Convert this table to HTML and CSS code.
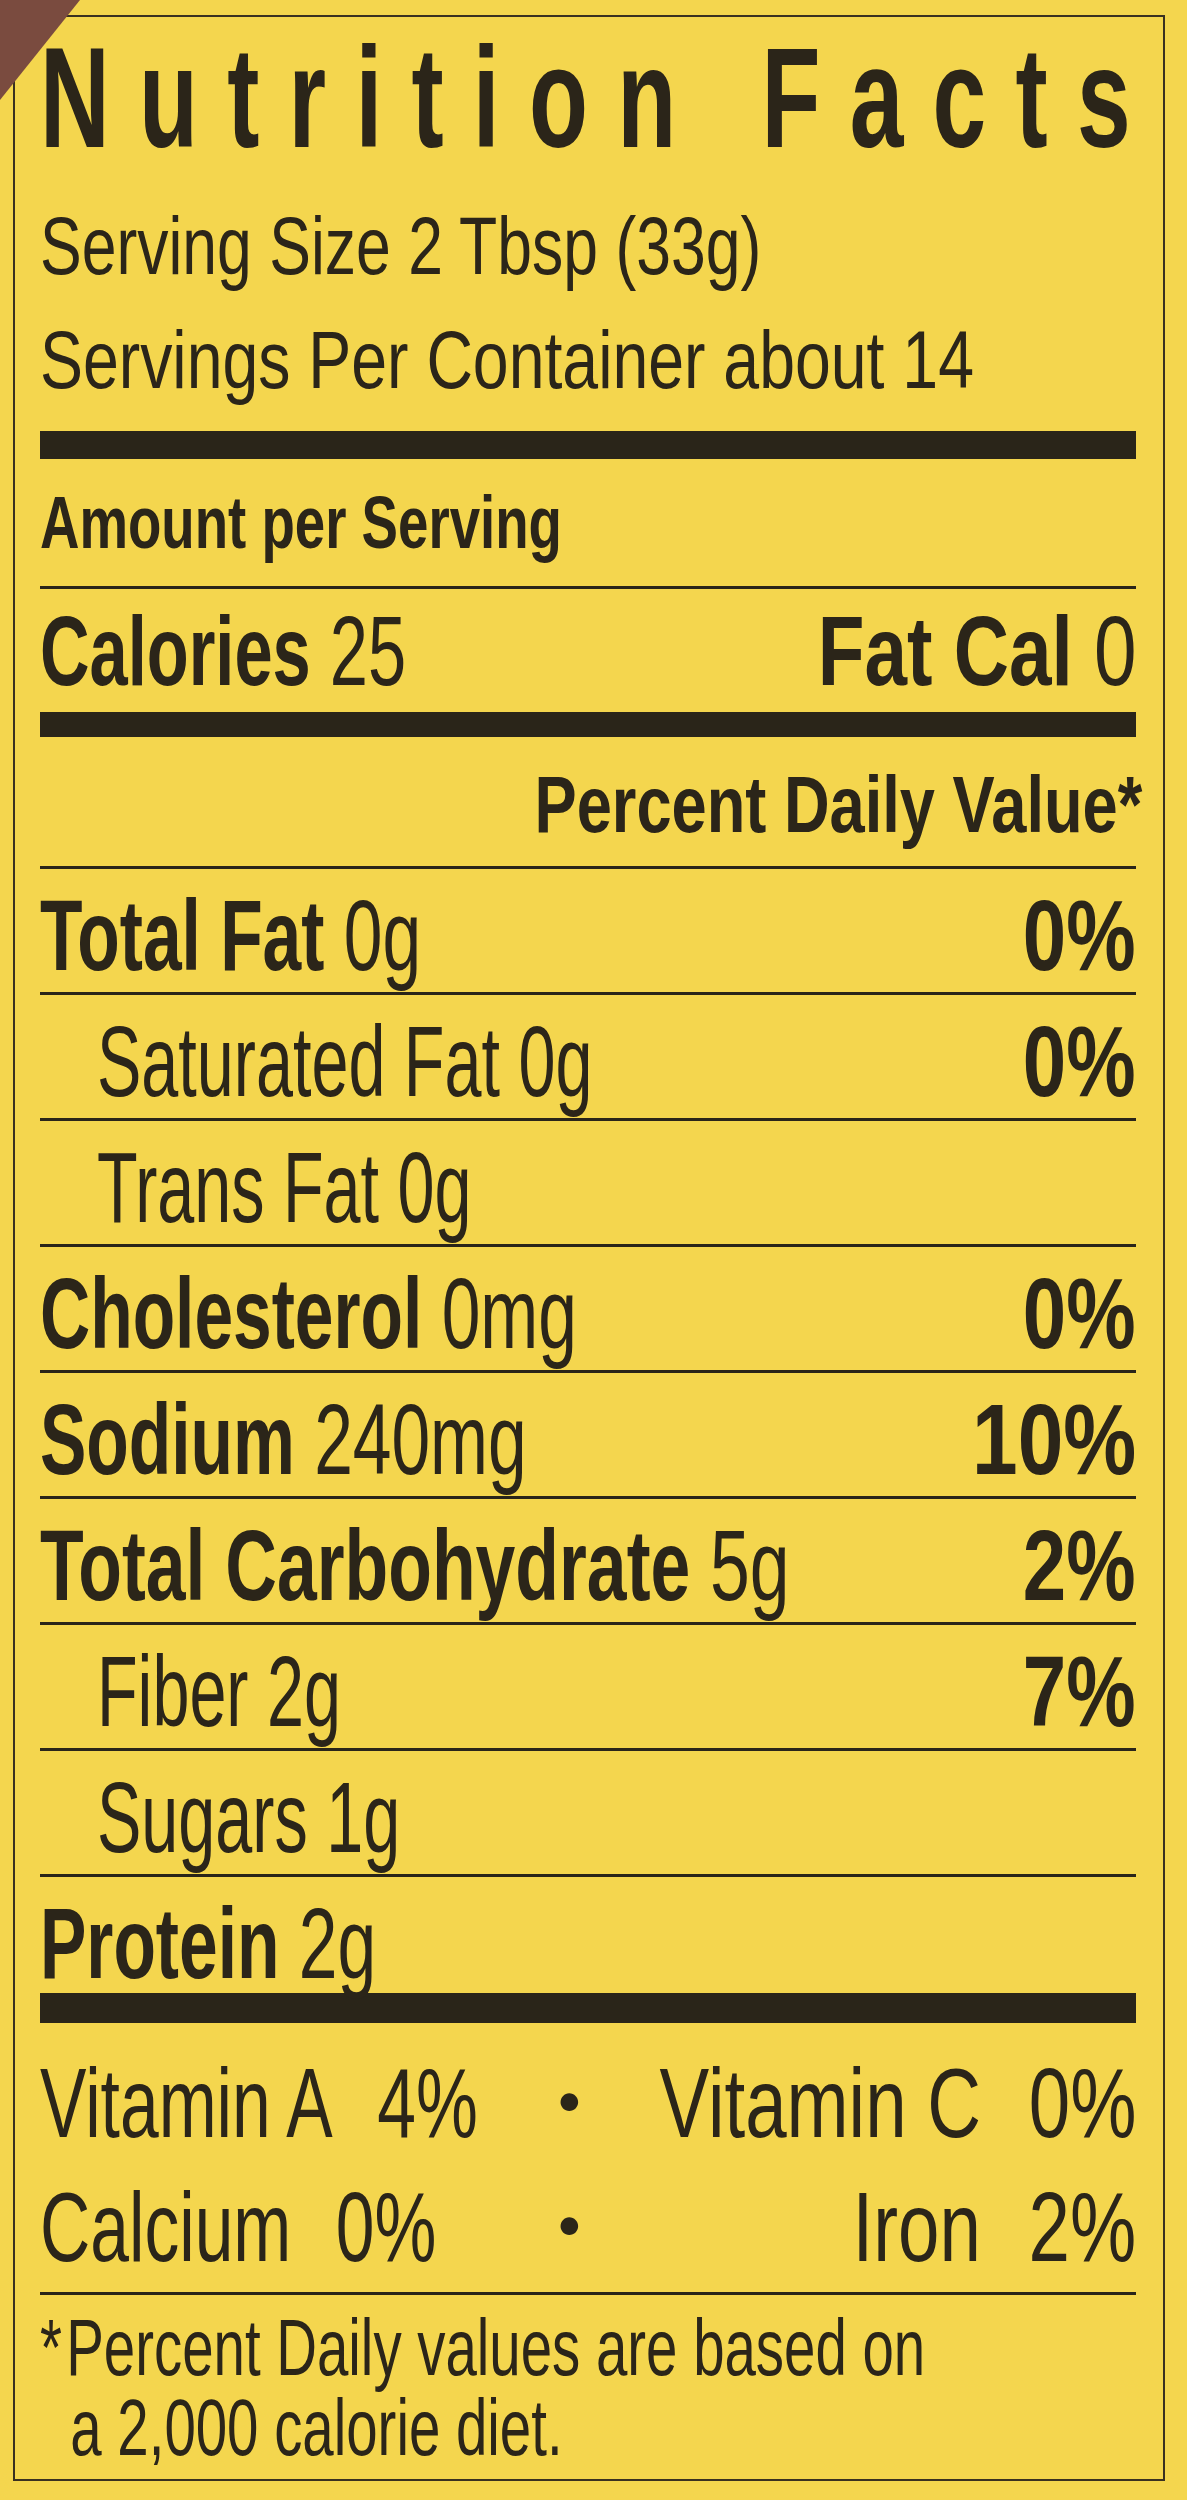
FILE: index.html
```html
<!DOCTYPE html>
<html lang="en">
<head>
<meta charset="utf-8">
<title>Nutrition Facts</title>
<link rel="stylesheet" href="styles.css">
</head>
<body>
<div class="corner"></div>
<div class="label">
  <h1 class="title">Nutrition Facts</h1>
  <div class="serving size">Serving Size 2 Tbsp (33g)</div>
  <div class="serving per">Servings Per Container about 14</div>
  <div class="bar bar-top"></div>
  <div class="amount">Amount per Serving</div>
  <div class="rule"></div>
  <div class="calories">
    <span class="sq cal-l"><b>Calories</b> 25</span>
    <span class="sq cal-r"><b>Fat Cal</b> 0</span>
  </div>
  <div class="bar bar-mid"></div>
  <div class="dv-wrap"><div class="dv">Percent Daily Value*</div></div>
  <div class="rule"></div>
  <div class="row"><span class="sq name"><b>Total Fat</b> 0g</span><b class="sq pct">0%</b></div>
  <div class="row sub"><span class="sq name">Saturated Fat 0g</span><b class="sq pct">0%</b></div>
  <div class="row sub"><span class="sq name">Trans Fat 0g</span></div>
  <div class="row"><span class="sq name"><b>Cholesterol</b> 0mg</span><b class="sq pct">0%</b></div>
  <div class="row"><span class="sq name"><b>Sodium</b> 240mg</span><b class="sq pct wide">10%</b></div>
  <div class="row"><span class="sq name carb"><b>Total Carbohydrate</b> 5g</span><b class="sq pct">2%</b></div>
  <div class="row sub"><span class="sq name">Fiber 2g</span><b class="sq pct">7%</b></div>
  <div class="row sub"><span class="sq name">Sugars 1g</span></div>
  <div class="row last"><span class="sq name"><b>Protein</b> 2g</span></div>
  <div class="bar bar-bottom"></div>
  <div class="vitamins">
    <div class="vit-row">
      <div class="vit-cell"><span class="sq vit">Vitamin A<span class="gap">4%</span></span></div>
      <span class="dot">·</span>
      <div class="vit-cell right"><span class="sq vit-r">Vitamin C<span class="gap">0%</span></span></div>
    </div>
    <div class="vit-row">
      <div class="vit-cell"><span class="sq vit">Calcium<span class="gap">0%</span></span></div>
      <span class="dot">·</span>
      <div class="vit-cell right"><span class="sq vit-r">Iron<span class="gap">2%</span></span></div>
    </div>
  </div>
  <div class="rule"></div>
  <div class="foot">
    <p class="foot-line"><span class="ast">*</span>Percent Daily values are based on</p>
    <p class="foot-line indent">a 2,000 calorie diet.</p>
  </div>
</div>
</body>
</html>
```

FILE: styles.css
```css
* {
  box-sizing: border-box;
  margin: 0;
  padding: 0;
}

html,
body {
  background: #f4d64e;
}

body {
  position: relative;
  width: 1187px;
  height: 2500px;
  overflow: hidden;
  font-family: "Liberation Sans", Arial, sans-serif;
  color: #2b2519;
}

b {
  font-weight: 700;
}

/* corner of the neighbouring panel peeking over the label */
.corner {
  position: absolute;
  left: 0;
  top: 0;
  width: 80px;
  height: 100px;
  background: #7a4b3f;
  clip-path: polygon(0 0, 100% 0, 0 100%);
}

.label {
  margin: 15px 0 0 13px;
  width: 1152px;
  height: 2466px;
  border: 2px solid #3a3120;
  padding: 10px 27px 0 25px;
}

/* condensed-type helper: horizontal squeeze of a text run */
.sq {
  display: inline-block;
  white-space: nowrap;
  transform-origin: left center;
}

.title {
  width: max-content;
  font-size: 142px;
  line-height: 142px;
  font-weight: 700;
  letter-spacing: 43px;
  white-space: nowrap;
  transform: scaleX(0.68);
  transform-origin: left center;
}

.serving {
  width: max-content;
  font-size: 82px;
  line-height: 114px;
  white-space: nowrap;
  transform-origin: left center;
}

.serving.size {
  margin-top: 20px;
  transform: scaleX(0.762);
}

.serving.per {
  transform: scaleX(0.785);
}

.bar {
  background: #2a2519;
}

.bar-top {
  height: 28px;
  margin-top: 14px;
}

.bar-mid {
  height: 25px;
}

.bar-bottom {
  height: 30px;
}

.rule {
  height: 3px;
  background: #2a2519;
}

.amount {
  width: max-content;
  font-size: 74px;
  line-height: 127px;
  font-weight: 700;
  white-space: nowrap;
  transform: scaleX(0.738);
  transform-origin: left center;
}

.calories {
  display: flex;
  justify-content: space-between;
  font-size: 98px;
  line-height: 121px;
  padding-top: 2px;
}

.cal-l {
  transform: scaleX(0.70);
}

.cal-r {
  transform: scaleX(0.78);
  transform-origin: right center;
}

.dv-wrap {
  display: flex;
  justify-content: flex-end;
  margin-right: -6px;
  padding-top: 6px;
}

.dv {
  font-size: 80px;
  line-height: 123px;
  font-weight: 700;
  white-space: nowrap;
  transform: scaleX(0.79);
  transform-origin: right center;
}

.row {
  display: flex;
  justify-content: space-between;
  font-size: 100px;
  line-height: 100px;
  padding: 16px 0 7px;
  border-bottom: 3px solid #2a2519;
}

.row.sub {
  padding-left: 57px;
}

.row.last {
  border-bottom: 0;
  padding-bottom: 0;
}

.name {
  flex: 1 1 0;
  min-width: 0;
  transform: scaleX(0.695);
}

.name.carb {
  transform: scaleX(0.715);
}

.row.sub .name {
  transform: scaleX(0.665);
}

.pct {
  flex: none;
  transform: scaleX(0.78);
  transform-origin: right center;
}

.pct.wide {
  transform: scaleX(0.82);
}

.vitamins {
  padding-top: 18px;
  margin-bottom: 3px;
}

.vit-row {
  display: flex;
  align-items: baseline;
  font-size: 98px;
  line-height: 124px;
}

.vit-cell {
  flex: none;
  width: 514px;
}

.vit-cell.right {
  flex: 1 1 0;
  width: auto;
  min-width: 0;
  display: flex;
  justify-content: flex-end;
}

.vit {
  transform: scaleX(0.71);
}

.vit-r {
  flex: none;
  transform: scaleX(0.76);
  transform-origin: right center;
}

.gap {
  margin-left: 0.64em;
}

.dot {
  flex: none;
  width: 20px;
  text-align: center;
  font-family: Lato, "Open Sans", sans-serif;
  font-size: 118px;
  line-height: 100px;
}

.foot {
  padding-top: 13px;
}

.foot-line {
  width: max-content;
  font-size: 80px;
  line-height: 80px;
  white-space: nowrap;
  transform: scaleX(0.705);
  transform-origin: left center;
}

.foot-line.indent {
  padding-left: 43px;
}

.ast {
  margin-right: 6px;
}
```
